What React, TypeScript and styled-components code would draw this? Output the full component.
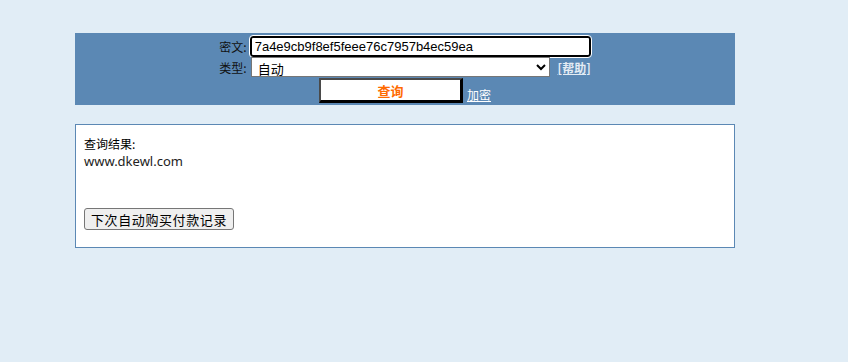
import React from 'react';
import styled, { createGlobalStyle } from 'styled-components';

const GlobalStyle = createGlobalStyle`
  html, body {
    margin: 0;
    padding: 0;
    background: #e1edf6;
  }
  body {
    font-family: "Liberation Sans", "Noto Sans CJK SC", sans-serif;
    font-size: 12px;
    color: #000;
  }
`;

const Page = styled.div`
  padding: 33px 0 0 75px;
  width: 660px;
`;

const QueryPanel = styled.form`
  background: #5b88b4;
  padding: 3px 0 2px;
  display: flex;
  flex-direction: column;
  align-items: center;
`;

const FieldGrid = styled.div`
  display: grid;
  grid-template-columns: auto 341px;
  column-gap: 3px;
  align-items: center;
`;

const Label = styled.label`
  font-family: "Noto Sans CJK SC", sans-serif;
  font-size: 12px;
  text-align: right;
  color: #111;
`;

const CipherInput = styled.input`
  box-sizing: border-box;
  width: 341px;
  height: 21px;
  margin: 0;
  padding: 0 3px;
  border: 2px solid #000;
  border-radius: 3px;
  outline: 1px solid #fff;
  background: #fff;
  font-family: "Liberation Sans", sans-serif;
  font-size: 13px;
  color: #000;
`;

const SelectRow = styled.div`
  display: flex;
  align-items: center;
  justify-content: space-between;
  width: 341px;
`;

const TypeSelect = styled.select`
  box-sizing: border-box;
  width: 299px;
  height: 20px;
  margin: 0 0 0 1px;
  padding: 0 2px;
  border: 1px solid #767676;
  border-radius: 0;
  background: #fff;
  font-family: "Noto Sans CJK SC", sans-serif;
  font-size: 13px;
  color: #000;
`;

const PanelLink = styled.a<{ $bold?: boolean }>`
  font-family: "Noto Sans CJK SC", sans-serif;
  font-size: 12px;
  color: ${p => (p.$bold ? '#e4ecf4' : '#fff')};
  font-weight: ${p => (p.$bold ? 700 : 400)};
  text-decoration: underline;
  cursor: pointer;
`;

const ActionRow = styled.div`
  display: flex;
  align-items: flex-end;
  gap: 4px;
  margin-top: 1px;
`;

const QueryButton = styled.button`
  box-sizing: border-box;
  width: 144px;
  height: 25px;
  margin: 0;
  padding: 0;
  background: #fff;
  border-style: solid;
  border-width: 2px 3px 3px 2px;
  border-color: #4a4a4a #000 #000 #4a4a4a;
  font-family: "Noto Sans CJK SC", sans-serif;
  font-size: 13px;
  font-weight: 700;
  color: #ff6a00;
  cursor: pointer;
`;

const ResultBox = styled.div`
  margin-top: 19px;
  box-sizing: border-box;
  height: 124px;
  background: #fff;
  border: 1px solid #5b88b4;
  padding: 10px 8px;
`;

const ResultTitle = styled.div`
  font-family: "Noto Sans CJK SC", sans-serif;
  font-size: 12px;
  line-height: 18px;
`;

const ResultText = styled.div`
  font-family: "Noto Sans", sans-serif;
  font-size: 13px;
  line-height: 16px;
  color: #222;
`;

const RecordButton = styled.button`
  margin-top: 39px;
  height: 22px;
  padding: 0 6px;
  background: #efefef;
  border: 1px solid #767676;
  border-radius: 3px;
  font-family: "Noto Sans CJK SC", sans-serif;
  font-size: 13px;
  letter-spacing: 0.6px;
  color: #000;
`;

export default function App() {
  return (
    <>
      <GlobalStyle />
      <Page>
        <QueryPanel onSubmit={e => e.preventDefault()}>
          <FieldGrid>
            <Label htmlFor="cipher">密文:</Label>
            <CipherInput id="cipher" defaultValue="7a4e9cb9f8ef5feee76c7957b4ec59ea" />
            <Label htmlFor="kind">类型:</Label>
            <SelectRow>
              <TypeSelect id="kind" defaultValue="auto">
                <option value="auto">自动</option>
              </TypeSelect>
              <PanelLink $bold>[帮助]</PanelLink>
            </SelectRow>
          </FieldGrid>
          <ActionRow>
            <QueryButton type="submit">查询</QueryButton>
            <PanelLink>加密</PanelLink>
          </ActionRow>
        </QueryPanel>
        <ResultBox>
          <ResultTitle>查询结果:</ResultTitle>
          <ResultText>www.dkewl.com</ResultText>
          <RecordButton type="button">下次自动购买付款记录</RecordButton>
        </ResultBox>
      </Page>
    </>
  );
}
